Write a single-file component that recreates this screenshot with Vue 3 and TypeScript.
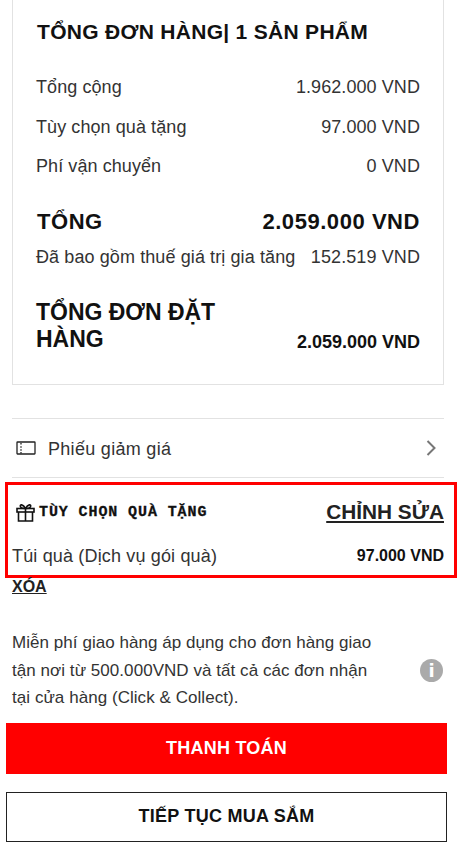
<script setup lang="ts">
const rows = [
  { label: 'Tổng cộng', value: '1.962.000 VND' },
  { label: 'Tùy chọn quà tặng', value: '97.000 VND' },
  { label: 'Phí vận chuyển', value: '0 VND' },
]
</script>

<template>
  <main class="page">
    <section class="card">
      <h2 class="card-title">TỔNG ĐƠN HÀNG| 1 SẢN PHẨM</h2>
      <div class="rows">
        <div v-for="r in rows" :key="r.label" class="row">
          <span>{{ r.label }}</span><span>{{ r.value }}</span>
        </div>
      </div>
      <div class="total">
        <span>TỔNG</span><span>2.059.000 VND</span>
      </div>
      <div class="vat">
        <span>Đã bao gồm thuế giá trị gia tăng</span><span>152.519 VND</span>
      </div>
      <div class="grand">
        <span class="grand-label">TỔNG ĐƠN ĐẶT HÀNG</span>
        <span class="grand-value">2.059.000 VND</span>
      </div>
    </section>

    <div class="coupon">
      <svg class="coupon-icon" width="20" height="14" viewBox="0 0 20 14" fill="none" stroke="#222" stroke-width="1.3">
        <rect x="1" y="1" width="18" height="12" rx="0.5" />
        <path d="M5 2v1.5M5 5.2v1.5M5 8.2v1.5M5 11v1.5" />
      </svg>
      <span class="coupon-text">Phiếu giảm giá</span>
      <svg class="chevron" width="11" height="16" viewBox="0 0 11 16" fill="none" stroke="#777" stroke-width="2">
        <path d="M1.5 1l7 7-7 7" />
      </svg>
    </div>

    <section class="gift">
      <div class="gift-head">
        <div class="gift-title">
          <svg width="19" height="19" viewBox="0 0 19 19" fill="none" stroke="#111" stroke-width="1.6">
            <rect x="1" y="5.5" width="17" height="3.5" />
            <path d="M2.5 9v9h14V9M9.5 5.5V18M9.5 5.5C7 1 3.5 1 4.5 3.7 5 5 7.5 5.5 9.5 5.5ZM9.5 5.5C12 1 15.5 1 14.5 3.7 14 5 11.5 5.5 9.5 5.5Z" />
          </svg>
          <span class="gift-label">TÙY CHỌN QUÀ TẶNG</span>
        </div>
        <a class="edit">CHỈNH SỬA</a>
      </div>
      <div class="gift-item">
        <span>Túi quà (Dịch vụ gói quà)</span>
        <strong>97.000 VND</strong>
      </div>
    </section>
    <a class="remove">XÓA</a>

    <div class="note">
      <p>Miễn phí giao hàng áp dụng cho đơn hàng giao tận nơi từ 500.000VND và tất cả các đơn nhận tại cửa hàng (Click &amp; Collect).</p>
      <span class="info">i</span>
    </div>

    <button class="btn primary">THANH TOÁN</button>
    <button class="btn secondary">TIẾP TỤC MUA SẮM</button>
  </main>
</template>

<style>
html, body { margin: 0; background: #fff; }
</style>

<style scoped>
.page {
  width: 460px;
  height: 853px;
  overflow: hidden;
  box-sizing: border-box;
  font-family: "Liberation Sans", Arial, sans-serif;
  color: #333;
  font-size: 18px;
  letter-spacing: 0.08px;
  display: flex;
  flex-direction: column;
  padding-left: 12px;
  padding-right: 16px;
}
.card {
  flex: none;
  box-sizing: border-box;
  height: 385px;
  border: 1px solid #e2e2e2;
  border-top: none;
  padding: 18px 23px 0 23px;
}
.card-title { margin: 0 0 0 1px; font-size: 21px; line-height: 28px; font-weight: 700; color: #111; letter-spacing: 0.3px; }
.rows { margin-top: 28px; display: flex; flex-direction: column; gap: 13.5px; }
.row { display: flex; justify-content: space-between; line-height: 26px; }
.total { display: flex; justify-content: space-between; margin: 29px 0 0 1px; font-size: 22px; line-height: 28px; font-weight: 700; color: #111; letter-spacing: 0.55px; }
.vat { display: flex; justify-content: space-between; margin-top: 8px; line-height: 26px; white-space: nowrap; letter-spacing: 0.1px; }
.grand { display: flex; justify-content: space-between; align-items: flex-end; margin: 29px 0 0 0; }
.grand-label { width: 200px; font-size: 23px; line-height: 27px; font-weight: 700; color: #111; letter-spacing: -0.02px; }
.grand-value { font-size: 18px; line-height: 26px; font-weight: 700; color: #111; letter-spacing: 0; margin-bottom: -2px; }
.coupon {
  flex: none;
  box-sizing: border-box;
  height: 60px;
  margin-top: 33px;
  border-top: 1px solid #e2e2e2;
  border-bottom: 1px solid #e2e2e2;
  display: flex;
  align-items: center;
  padding: 0 7px 0 4px;
}
.coupon-icon { flex: none; }
.coupon-text { margin-left: 12px; flex: 1; letter-spacing: 0.3px; position: relative; top: 1px; }
.gift {
  flex: none;
  box-sizing: border-box;
  height: 96px;
  margin: 4px -13px 0 -7px;
  border: 3px solid #f00;
  padding: 0 10px 0 4px;
  display: flex;
  flex-direction: column;
}
.gift-head { display: flex; justify-content: space-between; align-items: center; height: 48px; margin-top: 3px; }
.gift-title { display: flex; align-items: center; gap: 4px; padding-left: 4px; }
.gift-label { font-family: "Liberation Mono", monospace; font-weight: 700; font-size: 15px; letter-spacing: 0.9px; -webkit-text-stroke: 0.3px #111; color: #111; }
.edit { font-size: 20.8px; font-weight: 700; color: #222; text-decoration: underline; letter-spacing: 0; }
.gift-item { display: flex; justify-content: space-between; align-items: center; line-height: 26px; margin-top: 7px; letter-spacing: 0.16px; }
.gift-item strong { font-size: 16px; color: #111; letter-spacing: 0; }
.remove { flex: none; font-size: 16px; line-height: 20px; font-weight: 700; color: #222; text-decoration: underline; margin-top: -1px; width: max-content; letter-spacing: 0; }
.note { flex: none; display: flex; align-items: center; justify-content: space-between; margin-top: 32px; }
.note p { margin: 0; width: 372px; font-size: 17px; line-height: 27.5px; letter-spacing: 0.05px; color: #333; }
.info {
  flex: none;
  width: 23px;
  height: 23px;
  border-radius: 50%;
  background: #aaa;
  color: #fff;
  font-family: "DejaVu Sans", sans-serif;
  font-weight: 700;
  font-size: 18px;
  line-height: 23px;
  text-align: center;
  margin: 0 1px 0 0;
}
.btn {
  flex: none;
  box-sizing: border-box;
  display: block;
  width: 441px;
  margin-left: -6px;
  font-family: inherit;
  font-weight: 700;
  font-size: 18px;
  letter-spacing: 0.25px;
  padding: 0;
}
.primary { height: 51px; margin-top: 11px; background: #f00; color: #fff; border: none; }
.secondary { height: 50px; margin-top: 18px; background: #fff; color: #111; border: 1px solid #222; }
</style>
